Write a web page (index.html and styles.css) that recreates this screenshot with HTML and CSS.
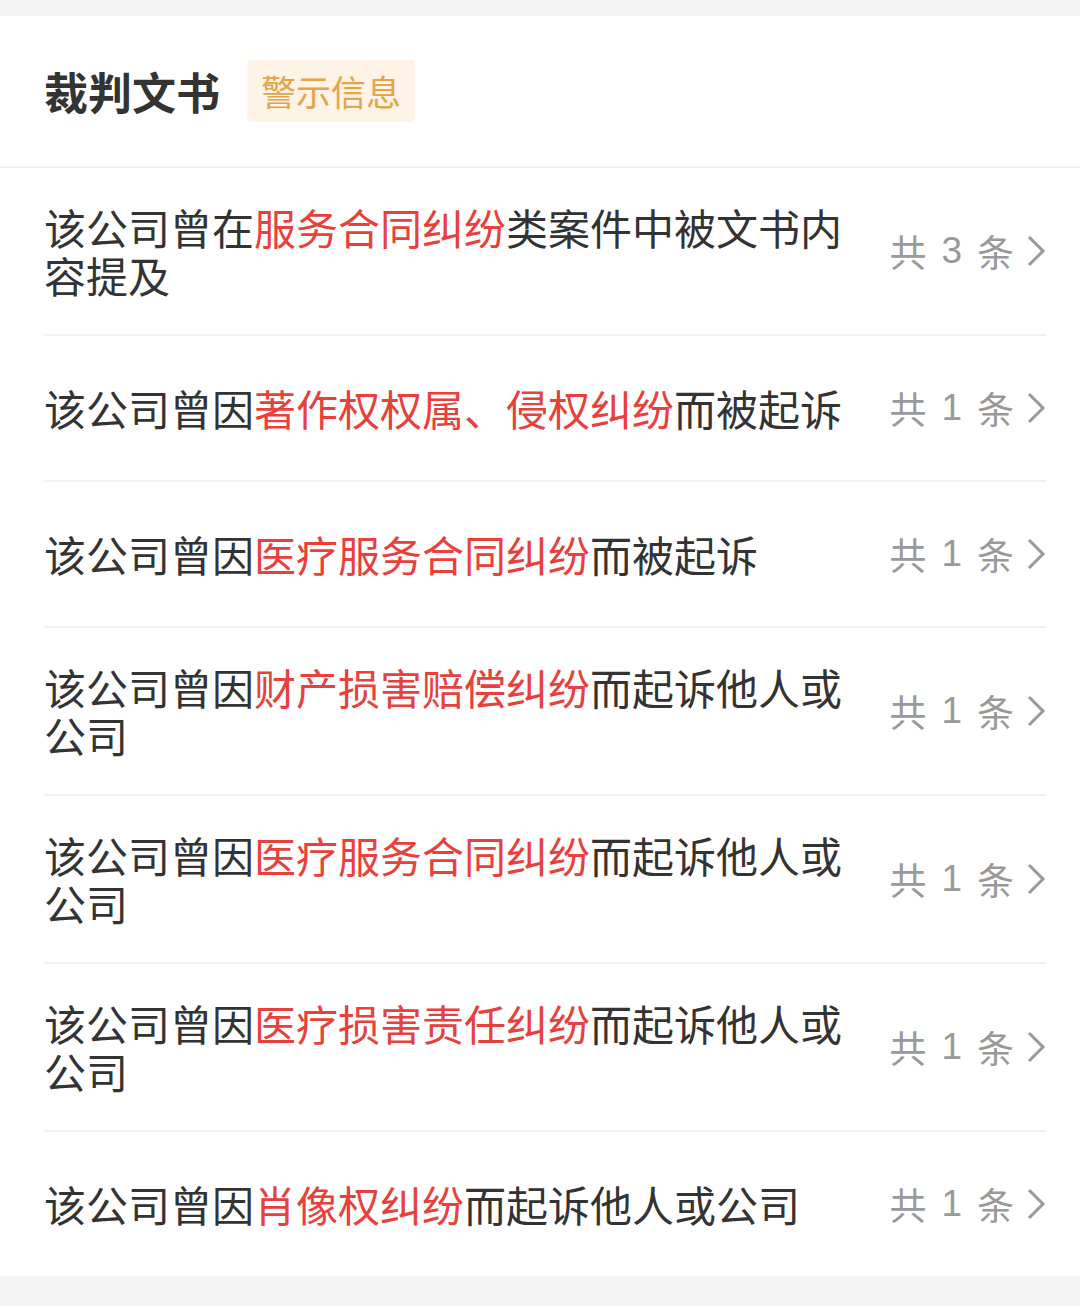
FILE: index.html
```html
<!DOCTYPE html>
<html lang="zh-CN">
<head>
    <meta charset="UTF-8">
    <meta name="viewport" content="width=device-width, initial-scale=1.0">
    <title>裁判文书</title>
    <link rel="stylesheet" href="styles.css">
</head>
<body>
    <div class="card">
        <div class="card-head">
            <h2>裁判文书</h2>
            <span class="badge">警示信息</span>
        </div>

        <ul class="doc-list">
            <li class="doc-row">
                <p class="doc-text">该公司曾在<em>服务合同纠纷</em>类案件中被文书内容提及</p>
                <span class="doc-count">共<b>3</b>条<svg class="chev" viewBox="0 0 20 32"><path d="M3 2 L17 16 L3 30"/></svg></span>
            </li>
            <li class="doc-row">
                <p class="doc-text">该公司曾因<em>著作权权属、侵权纠纷</em>而被起诉</p>
                <span class="doc-count">共<b>1</b>条<svg class="chev" viewBox="0 0 20 32"><path d="M3 2 L17 16 L3 30"/></svg></span>
            </li>
            <li class="doc-row">
                <p class="doc-text">该公司曾因<em>医疗服务合同纠纷</em>而被起诉</p>
                <span class="doc-count">共<b>1</b>条<svg class="chev" viewBox="0 0 20 32"><path d="M3 2 L17 16 L3 30"/></svg></span>
            </li>
            <li class="doc-row">
                <p class="doc-text">该公司曾因<em>财产损害赔偿纠纷</em>而起诉他人或公司</p>
                <span class="doc-count">共<b>1</b>条<svg class="chev" viewBox="0 0 20 32"><path d="M3 2 L17 16 L3 30"/></svg></span>
            </li>
            <li class="doc-row">
                <p class="doc-text">该公司曾因<em>医疗服务合同纠纷</em>而起诉他人或公司</p>
                <span class="doc-count">共<b>1</b>条<svg class="chev" viewBox="0 0 20 32"><path d="M3 2 L17 16 L3 30"/></svg></span>
            </li>
            <li class="doc-row">
                <p class="doc-text">该公司曾因<em>医疗损害责任纠纷</em>而起诉他人或公司</p>
                <span class="doc-count">共<b>1</b>条<svg class="chev" viewBox="0 0 20 32"><path d="M3 2 L17 16 L3 30"/></svg></span>
            </li>
            <li class="doc-row">
                <p class="doc-text">该公司曾因<em>肖像权纠纷</em>而起诉他人或公司</p>
                <span class="doc-count">共<b>1</b>条<svg class="chev" viewBox="0 0 20 32"><path d="M3 2 L17 16 L3 30"/></svg></span>
            </li>
        </ul>
    </div>
</body>
</html>
```

FILE: styles.css
```css
body {
    font-family: "Noto Sans CJK SC", "Noto Sans", sans-serif;
    background-color: #f4f4f4;
    color: #333;
    margin: 0;
    padding: 16px 0 0;
}
.card {
    background-color: #fff;
}
.card-head {
    display: flex;
    align-items: center;
    height: 152px;
    padding: 0 44px;
    border-bottom: 2px solid #f0f0f0;
    box-sizing: border-box;
}
.card-head h2 {
    margin: 0;
    font-size: 44px;
    font-weight: 700;
    color: #333;
}
.badge {
    margin-left: 27px;
    padding: 6px 14px;
    background-color: #fdf3e6;
    color: #e2a54a;
    font-size: 35px;
    line-height: 50px;
    border-radius: 4px;
}
.doc-list {
    list-style: none;
    margin: 0;
    padding: 0 34px 0 44px;
}
.doc-row {
    display: flex;
    align-items: center;
    min-height: 74px;
    padding: 35px 0;
    border-bottom: 2px solid #f2f2f2;
}
.doc-row:last-child {
    border-bottom: none;
}
.doc-text {
    flex: 1;
    margin: 0 36px 0 0;
    font-size: 42px;
    line-height: 48px;
    color: #333;
}
.doc-text em {
    font-style: normal;
    color: #e8403a;
}
.doc-count {
    display: flex;
    align-items: center;
    white-space: nowrap;
    font-size: 37px;
    color: #999;
}
.doc-count b {
    font-family: "Liberation Sans", sans-serif;
    font-weight: 400;
    margin: 0 15px;
}
.chev {
    width: 20px;
    height: 32px;
    margin-left: 12px;
    fill: none;
    stroke: #999;
    stroke-width: 3;
}
```
